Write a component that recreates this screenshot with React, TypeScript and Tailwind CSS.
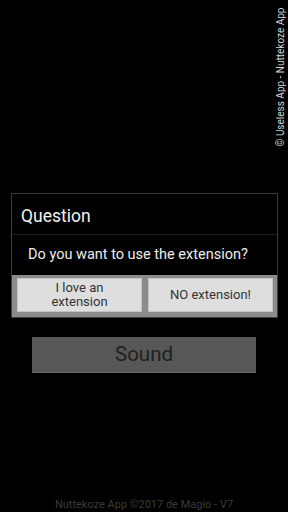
export default function App() {
  return (
    <div className="relative w-[288px] h-[512px] bg-black overflow-hidden" style={{ fontFamily: 'Roboto, "Liberation Sans", sans-serif' }}>
      {/* side credit */}
      <div className="absolute left-[276px] top-[2px] w-[11px] h-[150px] flex items-center justify-center">
        <span className="block whitespace-nowrap text-[10px] leading-none text-[#d8d8d8] -rotate-90">© Useless App - Nuttekoze App</span>
      </div>

      <div className="flex flex-col pt-[193px]">
        {/* dialog */}
        <div className="ml-[11px] w-[267px] border border-[#3c3c3c] bg-black flex flex-col">
          <div className="h-[41px] flex items-end pl-[9px] pb-[9px] border-b border-[#1c1c1c]">
            <span className="text-[17.5px] leading-none text-[#f2f2f2]">Question</span>
          </div>
          <div className="h-[40px] flex items-center pl-[16px]">
            <span className="text-[14.5px] leading-none text-[#eeeeee]">Do you want to use the extension?</span>
          </div>
          <div className="bg-[#8c8c8c] flex gap-[6px] pl-[5px] pr-[4px] pt-[3px] pb-[5px]">
            <button className="w-[125px] h-[34px] bg-[#dedede] border border-[#c4c4c4] text-[13px] leading-[14px] text-[#333333]">
              I love an<br />extension
            </button>
            <button className="w-[125px] h-[34px] bg-[#dedede] border border-[#c4c4c4] text-[13px] leading-[14px] text-[#333333]">
              NO extension!
            </button>
          </div>
        </div>

        {/* sound button */}
        <div className="mt-[19px] ml-[32px] w-[224px] h-[36px] bg-[#575757] border-b border-[#666666] flex items-center justify-center">
          <span className="text-[20.5px] leading-none text-[#1f1f1f]">Sound</span>
        </div>

        <div className="mt-[126px] text-center text-[11px] leading-none text-[#3a3a3a]">
          Nuttekoze App ©2017 de Magio - V7
        </div>
      </div>
    </div>
  );
}
